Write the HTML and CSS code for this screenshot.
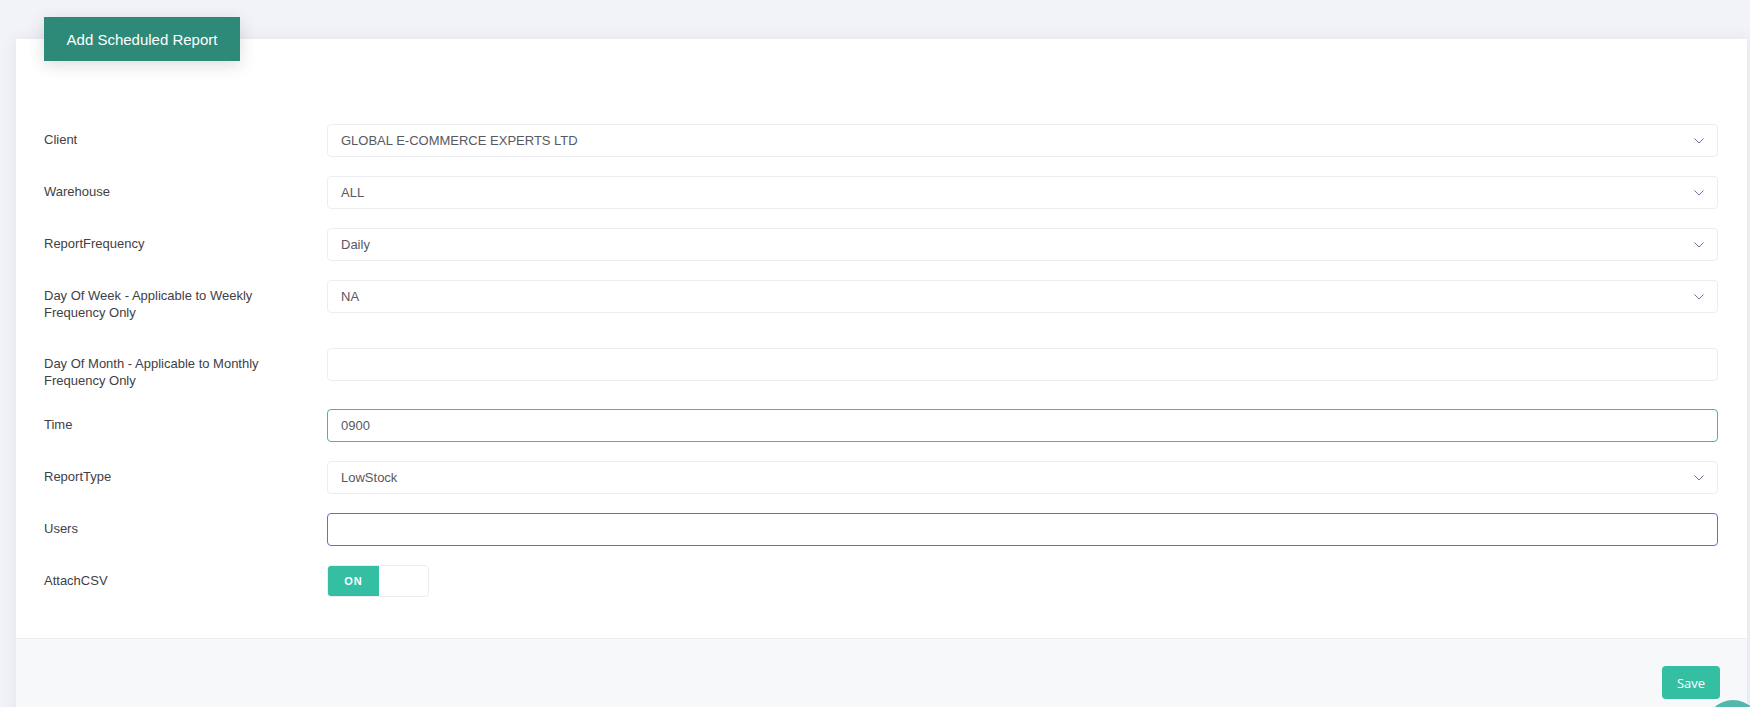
FILE: index.html
```html
<!DOCTYPE html>
<html lang="en">
<head>
    <meta charset="UTF-8">
    <meta name="viewport" content="width=device-width, initial-scale=1.0">
    <title>Add Scheduled Report</title>
    <link rel="stylesheet" href="styles.css">
</head>
<body>
    <div class="portlet">
        <div class="portlet-body">
            <div class="portlet-head">
                <span class="head-title">Add Scheduled Report</span>
            </div>

            <form class="report-form">
                <div class="form-row">
                    <label class="form-label">Client</label>
                    <div class="select-box">
                        <span>GLOBAL E-COMMERCE EXPERTS LTD</span>
                        <svg class="chevron" width="10" height="6" viewBox="0 0 10 6"><polyline points="0.5,0.5 5,5 9.5,0.5" fill="none" stroke="#6c7293" stroke-width="1"/></svg>
                    </div>
                </div>
                <div class="form-row">
                    <label class="form-label">Warehouse</label>
                    <div class="select-box">
                        <span>ALL</span>
                        <svg class="chevron" width="10" height="6" viewBox="0 0 10 6"><polyline points="0.5,0.5 5,5 9.5,0.5" fill="none" stroke="#6c7293" stroke-width="1"/></svg>
                    </div>
                </div>
                <div class="form-row">
                    <label class="form-label">ReportFrequency</label>
                    <div class="select-box">
                        <span>Daily</span>
                        <svg class="chevron" width="10" height="6" viewBox="0 0 10 6"><polyline points="0.5,0.5 5,5 9.5,0.5" fill="none" stroke="#6c7293" stroke-width="1"/></svg>
                    </div>
                </div>
                <div class="form-row form-row-tall">
                    <label class="form-label">Day Of Week - Applicable to Weekly Frequency Only</label>
                    <div class="select-box">
                        <span>NA</span>
                        <svg class="chevron" width="10" height="6" viewBox="0 0 10 6"><polyline points="0.5,0.5 5,5 9.5,0.5" fill="none" stroke="#6c7293" stroke-width="1"/></svg>
                    </div>
                </div>
                <div class="form-row">
                    <label class="form-label">Day Of Month - Applicable to Monthly Frequency Only</label>
                    <input class="form-input" type="text" value="">
                </div>
                <div class="form-row">
                    <label class="form-label">Time</label>
                    <input class="form-input input-success" type="text" value="0900">
                </div>
                <div class="form-row">
                    <label class="form-label">ReportType</label>
                    <div class="select-box">
                        <span>LowStock</span>
                        <svg class="chevron" width="10" height="6" viewBox="0 0 10 6"><polyline points="0.5,0.5 5,5 9.5,0.5" fill="none" stroke="#6c7293" stroke-width="1"/></svg>
                    </div>
                </div>
                <div class="form-row">
                    <label class="form-label">Users</label>
                    <input class="form-input input-focus" type="text" value="">
                </div>
                <div class="form-row">
                    <label class="form-label">AttachCSV</label>
                    <div class="switch">
                        <span class="switch-on">ON</span>
                        <span class="switch-off"></span>
                    </div>
                </div>
            </form>
        </div>

        <div class="portlet-foot">
            <button class="btn-save" type="button">Save</button>
        </div>
    </div>

    <div class="chat-bubble"></div>
</body>
</html>
```

FILE: styles.css
```css
body {
    font-family: "Liberation Sans", Arial, sans-serif;
    font-size: 13px;
    color: #3f4047;
    margin: 0;
    padding: 39px 3px 0 16px;
    background-color: #f2f3f8;
    border-top: 3px solid #ebebf1;
    box-sizing: border-box;
    margin-top: -3px;
}
.portlet {
    background-color: #ffffff;
    box-shadow: 0 1px 15px 1px rgba(69, 65, 78, 0.08);
}
.portlet-body {
    padding: 0 29px 22px 28px;
}
.portlet-head {
    display: flex;
}
.head-title {
    margin-top: -22px;
    height: 44px;
    width: 196px;
    display: flex;
    align-items: center;
    justify-content: center;
    background-color: #2d8a78;
    color: #ffffff;
    font-size: 15px;
    box-shadow: 0 4px 16px rgba(69, 65, 78, 0.18);
}
.report-form {
    margin-top: 63px;
}
.form-row {
    display: grid;
    grid-template-columns: 283px 1fr;
    align-items: start;
    margin-bottom: 19px;
}
.form-row-tall {
    margin-bottom: 26px;
}
.form-label {
    padding: 7px 40px 1px 0;
    line-height: 17px;
    color: #3f4047;
}
.select-box,
.form-input {
    height: 33px;
    box-sizing: border-box;
    border: 1px solid #ebedf2;
    border-radius: 4px;
    background-color: #ffffff;
    font-family: "Liberation Sans", Arial, sans-serif;
    font-size: 13px;
    color: #575962;
}
.select-box {
    display: flex;
    align-items: center;
    justify-content: space-between;
    padding: 0 13px 0 13px;
}
.form-input {
    width: 100%;
    padding: 0 13px;
    outline: none;
}
.input-success {
    border-color: #34bfa3;
}
.input-focus {
    border-color: #716aca;
}
.switch {
    display: flex;
    width: 102px;
    height: 32px;
    box-sizing: border-box;
    border: 1px solid #ebedf2;
    border-radius: 4px;
    overflow: hidden;
}
.switch-on {
    width: 51px;
    background-color: #34bfa3;
    color: #ffffff;
    font-weight: bold;
    font-size: 11px;
    letter-spacing: 1px;
    display: flex;
    align-items: center;
    justify-content: center;
}
.switch-off {
    flex: 1;
    background-color: #ffffff;
}
.portlet-foot {
    background-color: #f7f8fa;
    border-top: 1px solid #ebedf2;
    padding: 27px 27px 30px;
    display: flex;
    justify-content: flex-end;
}
.btn-save {
    width: 58px;
    height: 33px;
    border: none;
    border-radius: 4px;
    background-color: #34bfa3;
    color: #ffffff;
    font-family: "Open Sans", sans-serif;
    font-size: 13px;
    padding: 0;
}
.chat-bubble {
    position: fixed;
    right: -11px;
    bottom: -49px;
    width: 56px;
    height: 56px;
    border-radius: 50%;
    background-color: #52b8ae;
}
```
